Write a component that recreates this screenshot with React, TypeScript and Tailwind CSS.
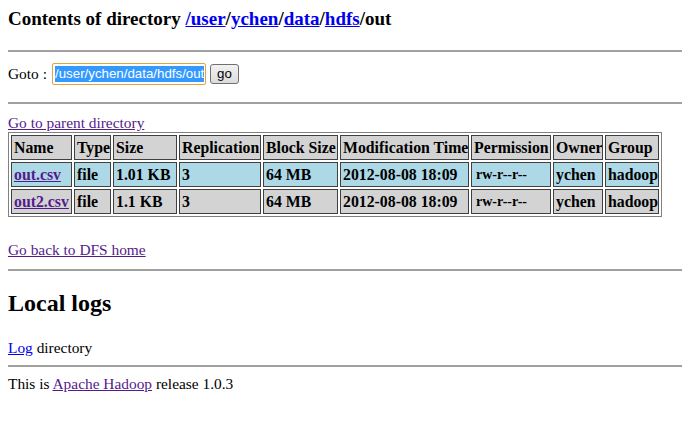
export default function App() {
  const cols = [
    { label: "Name", w: "w-[61px]" },
    { label: "Type", w: "w-[37px]" },
    { label: "Size", w: "w-[64px]" },
    { label: "Replication", w: "w-[82px]" },
    { label: "Block Size", w: "w-[75px]" },
    { label: "Modification Time", w: "w-[129px]" },
    { label: "Permission", w: "w-[80px]" },
    { label: "Owner", w: "w-[50px]" },
    { label: "Group", w: "w-[54px]" },
  ];

  const rows = [
    { name: "out.csv", size: "1.01 KB", bg: "bg-[#add8e6]" },
    { name: "out2.csv", size: "1.1 KB", bg: "bg-[#d3d3d3]" },
  ];

  const cell = "h-[25px] border border-[#404040] px-[2px] py-0 text-left align-middle text-[15.8px] font-bold whitespace-nowrap overflow-hidden";

  return (
    <div className="min-h-screen bg-white px-2 font-['Liberation_Serif',serif] text-[15.4px] leading-[18px] text-black">
      {/* header */}
      <h3 className="pt-2 text-[19px] font-bold leading-[22px]">
        Contents of directory{" "}
        <a href="#" className="text-[#0000ee] underline">/user</a>/
        <a href="#" className="text-[#0000ee] underline">ychen</a>/
        <a href="#" className="text-[#0000ee] underline">data</a>/
        <a href="#" className="text-[#0000ee] underline">hdfs</a>/out
      </h3>

      <hr className="mt-[20px] border-t-2 border-[#a0a0a0]" />

      {/* goto form */}
      <div className="mt-[11px] flex items-center">
        <span className="w-[44px]">Goto :</span>
        <div className="flex h-[22px] w-[154px] items-center rounded-[2px] border border-[#e3a53a] px-[2px]">
          <span className="bg-[#3399ff] font-['Liberation_Sans',sans-serif] text-[13.3px] leading-[16px] text-white">
            /user/ychen/data/hdfs/out
          </span>
        </div>
        <button className="ml-[4px] h-[20px] w-[29px] rounded-[3px] border border-[#707070] bg-gradient-to-b from-[#f2f2f2] to-[#dcdcdc] font-['Liberation_Sans',sans-serif] text-[13.3px] leading-[16px]">
          go
        </button>
      </div>

      <hr className="mt-[17px] border-t-2 border-[#a0a0a0]" />

      <div className="mt-[10px]">
        <a href="#" className="text-[#551a8b] underline">Go to parent directory</a>
      </div>

      {/* listing */}
      <table className="w-[654px] table-fixed border-separate border-spacing-[2px] border border-[#808080]">
        <thead>
          <tr className="bg-[#d3d3d3]">
            {cols.map((c) => (
              <th key={c.label} className={`${cell} ${c.w}`}>
                {c.label}
              </th>
            ))}
          </tr>
        </thead>
        <tbody>
          {rows.map((r) => (
            <tr key={r.name} className={r.bg}>
              <td className={cell}>
                <a href="#" className="text-[#551a8b] underline">{r.name}</a>
              </td>
              <td className={cell}>file</td>
              <td className={cell}>{r.size}</td>
              <td className={cell}>3</td>
              <td className={cell}>64 MB</td>
              <td className={cell}>2012-08-08 18:09</td>
              <td className={`${cell} pl-[4px] !text-[14px]`}>rw-r--r--</td>
              <td className={cell}>ychen</td>
              <td className={cell}>hadoop</td>
            </tr>
          ))}
        </tbody>
      </table>

      <div className="mt-[24px]">
        <a href="#" className="text-[#551a8b] underline">Go back to DFS home</a>
      </div>

      <hr className="mt-[10px] border-t-2 border-[#a0a0a0]" />

      {/* logs */}
      <h2 className="mt-[18px] text-[24px] font-bold leading-[28px]">Local logs</h2>

      <p className="mt-[22px]">
        <a href="#" className="text-[#0000ee] underline">Log</a> directory
      </p>

      <hr className="mt-[8px] border-t-2 border-[#a0a0a0]" />

      <p className="mt-[8px]">
        This is{" "}
        <a href="#" className="text-[#551a8b] underline">Apache Hadoop</a> release 1.0.3
      </p>
    </div>
  );
}
